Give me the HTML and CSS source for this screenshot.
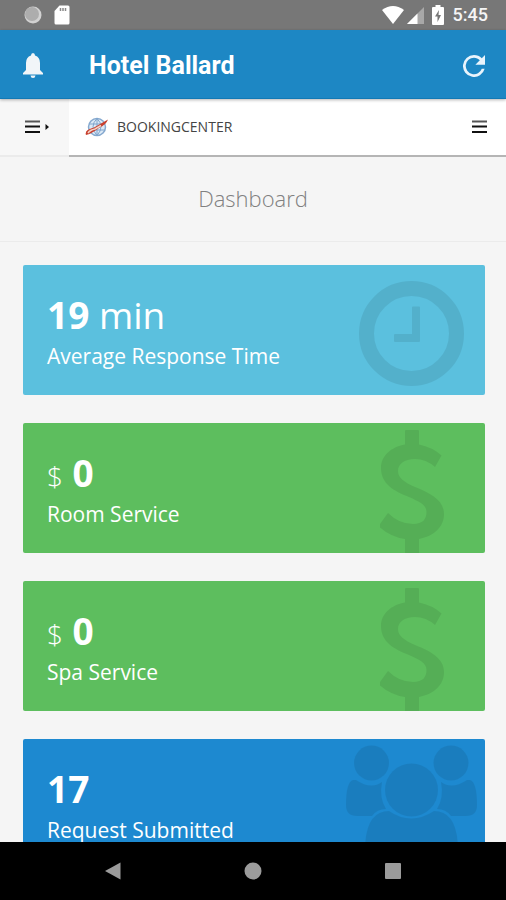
FILE: index.html
```html
<!DOCTYPE html>
<html lang="en">
<head>
<meta charset="utf-8">
<meta name="viewport" content="width=device-width, initial-scale=1">
<title>Hotel Ballard</title>
<link rel="stylesheet" href="styles.css">
</head>
<body>
<div class="status">
  <div class="status-group">
    <svg width="20" height="20" viewBox="0 0 20 20"><circle cx="10" cy="10" r="8.500" fill="#d2d2d2"/><circle cx="9" cy="9" r="7" fill="#adadad"/></svg>
    <svg width="16" height="20" viewBox="0 0 16 20"><path d="M5.500 0.500H14Q15.500.500 15.500 2V18Q15.500 19.500 14 19.500H2Q.500 19.500.500 18V6Z" fill="#fff"/><path d="M6.500 3v3M9 3v3M11.500 3v3" stroke="#8a8a8a" stroke-width="1.500"/></svg>
  </div>
  <div class="status-group status-right">
    <svg width="22" height="18" viewBox="0 0 22 18"><path d="M0 4Q11-4 22 4L11 18Z" fill="#fff"/></svg>
    <svg width="17" height="18" viewBox="0 0 17 18"><path d="M17 1V18H0Z" fill="#a8a8a8"/><path d="M10.500 7.500V18H0Z" fill="#fff"/></svg>
    <svg class="battery" width="12" height="20" viewBox="0 0 12 20"><path d="M3.500 0h5v2H11q1 0 1 1v16q0 1-1 1H1q-1 0-1-1V3q0-1 1-1h2.500Z" fill="#fff"/><path d="M7 5L3 11.500h2.500V17L9 10H6.500Z" fill="#777"/></svg>
    <span class="time">5:45</span>
  </div>
</div>

<header class="appbar">
  <button class="icon-button" type="button" aria-label="Notifications">
    <svg width="20" height="25" viewBox="0 0 20 25"><path d="M10 0q2 0 2 2.500Q17 4 17 10v7l3 3v1.500H0V20l3-3v-7Q3 4 8 2.500 8 0 10 0ZM7.500 22.500h5q-.300 2.500-2.500 2.500t-2.500-2.500Z" fill="#f1f5f8"/></svg>
  </button>
  <h1 class="app-title">Hotel Ballard</h1>
  <button class="icon-button" type="button" aria-label="Refresh">
    <svg width="22" height="22" viewBox="4 4 16 16"><path d="M17.650 6.350A7.950 7.950 0 0 0 12 4a8 8 0 1 0 7.730 10h-2.080A6 6 0 1 1 12 6c1.660 0 3.140.690 4.220 1.780L13 11h7V4Z" fill="#e9f4fc"/></svg>
  </button>
</header>

<main class="page">
  <nav class="subnav">
    <button class="side-toggle" type="button" aria-label="Open side menu">
      <svg width="24" height="14" viewBox="0 0 24 14"><path d="M0 1.500h15" stroke="#555" stroke-width="2"/><path d="M0 6.500h15M0 12h15" stroke="#111" stroke-width="2"/><path d="M20.500 4L24 7l-3.500 3Z" fill="#111"/></svg>
    </button>
    <div class="brandbar">
      <a class="brand" href="#">
        <svg width="24" height="20" viewBox="0 0 24 20"><circle cx="12" cy="10" r="8.500" fill="#dce9f5" stroke="#86a9cf" stroke-width="1.500"/><path d="M12 1.500v17M4 7h16M4 13h16M12 1.500q-8 8 0 17M12 1.500q8 8 0 17" fill="none" stroke="#7ea4cd"/><path d="M1 18Q-1 13 9 10.500L23 2.500Q21 8 14 11Q6 17 1 18Z" fill="#c8402f"/><path d="M3 16Q5 13 10 12L16 8.500" fill="none" stroke="#f3d2c5" stroke-width="1.500"/></svg>
        <span>BOOKINGCENTER</span>
      </a>
      <button class="menu-toggle" type="button" aria-label="Open menu">
        <svg width="15" height="14" viewBox="0 0 15 14"><path d="M0 1.500h15" stroke="#555" stroke-width="2"/><path d="M0 6.500h15M0 12h15" stroke="#111" stroke-width="2"/></svg>
      </button>
    </div>
  </nav>

  <h2 class="page-title">Dashboard</h2>

  <div class="cards">
    <section class="card card-info">
      <p class="value"><strong>19</strong> min</p>
      <p class="label">Average Response Time</p>
      <svg class="mark" width="156" height="130" viewBox="0 0 156 130"><circle cx="82.500" cy="68.500" r="45" fill="none" stroke="#000" stroke-width="15"/><path d="M83 42.500q0-1 1-1h6q1 0 1 1V76q0 1-1 1H66q-1 0-1-1v-6q0-1 1-1h17Z"/></svg>
    </section>
    <section class="card card-success">
      <p class="value"><small>$</small> <strong>0</strong></p>
      <p class="label">Room Service</p>
      <svg class="mark" width="156" height="130" viewBox="0 0 156 130"><path d="M76 8q0-1 1-1h12q1 0 1 1V21.500Q103 24 112.500 32.500L106 44Q97 36 86 36C75 36 69 41 69 48C69 55 75 59 86 64C101 70 115 77 115 91C115 104 105 113 90 116V130H76V116Q62 114 51 104.500V101L59 90Q70 101 84 101C94 101 97.500 96 97.500 89C97.500 82 91 79 80 74C65 68 52 61 52 45C52 33 62 24 76 21.500Z"/></svg>
    </section>
    <section class="card card-success">
      <p class="value"><small>$</small> <strong>0</strong></p>
      <p class="label">Spa Service</p>
      <svg class="mark" width="156" height="130" viewBox="0 0 156 130"><path d="M76 8q0-1 1-1h12q1 0 1 1V21.500Q103 24 112.500 32.500L106 44Q97 36 86 36C75 36 69 41 69 48C69 55 75 59 86 64C101 70 115 77 115 91C115 104 105 113 90 116V130H76V116Q62 114 51 104.500V101L59 90Q70 101 84 101C94 101 97.500 96 97.500 89C97.500 82 91 79 80 74C65 68 52 61 52 45C52 33 62 24 76 21.500Z"/></svg>
    </section>
    <section class="card card-primary">
      <p class="value"><strong>17</strong></p>
      <p class="label">Request Submitted</p>
      <svg class="mark" width="156" height="130" viewBox="0 0 156 130"><circle cx="42.500" cy="24" r="17.500"/><circle cx="122" cy="24" r="17.500"/><circle cx="82.500" cy="51" r="26.500"/><path d="M27 41Q42 51 53 43Q50 59 57 70Q48 70 43 77H28Q17 77 17 66Q17 43 24 41Z"/><path d="M138 41Q123 51 112 43Q115 59 108 70Q117 70 122 77H137Q148 77 148 66Q148 43 141 41Z"/><path d="M36 112Q36 72 60 72Q82 87 105 72Q129 72 129 112Q129 130 115 130H50Q36 130 36 112Z"/></svg>
    </section>
  </div>
</main>

<nav class="softkeys">
  <button type="button" aria-label="Back"><svg width="18" height="18" viewBox="0 0 18 18"><path d="M1 9L16.500.500V17.500Z" fill="#9b9b9b"/></svg></button>
  <button type="button" aria-label="Home"><svg width="18" height="18" viewBox="0 0 18 18"><circle cx="9" cy="9" r="8.500" fill="#9b9b9b"/></svg></button>
  <button type="button" aria-label="Recent apps"><svg width="18" height="18" viewBox="0 0 18 18"><rect x="1" y="1" width="16" height="16" rx="1" fill="#9b9b9b"/></svg></button>
</nav>
</body>
</html>
```
FILE: styles.css
```css
* { box-sizing: border-box; }

body {
  margin: 0;
  height: 100vh;
  display: flex;
  flex-direction: column;
  overflow: hidden;
  background: #f5f5f5;
  font-family: "Open Sans", sans-serif;
}

h1, h2, p { margin: 0; }
svg { display: block; }

button {
  display: flex;
  align-items: center;
  justify-content: center;
  padding: 0;
  border: 0;
  background: none;
}

.status {
  flex: none;
  height: 30px;
  padding: 0 18px 0 23px;
  display: flex;
  align-items: center;
  justify-content: space-between;
  background: #777;
}

.status-group { display: flex; align-items: center; gap: 11px; }
.status-right { gap: 3px; }
.battery { margin: 0 6px 0 5px; }

.time {
  color: #f5f5f5;
  font: 500 18px/30px Roboto, sans-serif;
}

.appbar {
  flex: none;
  position: relative;
  height: 69px;
  padding: 3px 21px 0 23px;
  display: flex;
  align-items: center;
  background: #1d87c4;
  border-bottom: 1px solid #1279b5;
  box-shadow: 0 1px 3px rgba(0, 0, 0, 0.3);
}

.app-title {
  flex: 1;
  margin-left: 46px;
  color: #fff;
  font: 700 25px/30px Roboto, sans-serif;
}

.page { flex: 1; min-height: 0; overflow: hidden; }

.subnav { display: flex; height: 58px; }

.side-toggle {
  width: 69px;
  padding-left: 4px;
  background: #f7f7f7;
  border-bottom: 2px solid #ebebeb;
}

.brandbar {
  flex: 1;
  display: flex;
  align-items: center;
  justify-content: space-between;
  padding: 0 19px 0 16px;
  background: #fff;
  border-bottom: 2px solid #b5b5b5;
}

.brand {
  display: flex;
  align-items: center;
  gap: 8px;
  color: #444;
  font-size: 14px;
  line-height: 20px;
  text-decoration: none;
}

.page-title {
  padding: 25px 0 27px;
  border-bottom: 1px solid #ebebeb;
  color: #808080;
  font-size: 22px;
  font-weight: 300;
  line-height: 32px;
  text-align: center;
}

.cards {
  display: flex;
  flex-direction: column;
  gap: 28px;
  padding: 23px 21px 28px 23px;
}

.card {
  position: relative;
  padding: 25px 24px 23px;
  border-radius: 2px;
  color: #fff;
}

.card-info { background: #5bc0de; }
.card-success { background: #5dbe5e; }
.card-primary { background: #1d89d0; }

.value { font-size: 37px; font-weight: 400; line-height: 50px; }
.value strong { font-weight: 700; }
.value small { font-size: 28px; font-weight: 300; line-height: 1; }
.label { font-size: 21px; line-height: 32px; }

.mark { position: absolute; top: 0; right: 0; opacity: 0.08; }

.softkeys {
  flex: none;
  height: 58px;
  display: grid;
  grid-template-columns: repeat(3, 140px);
  justify-content: center;
  background: #000;
}
```
